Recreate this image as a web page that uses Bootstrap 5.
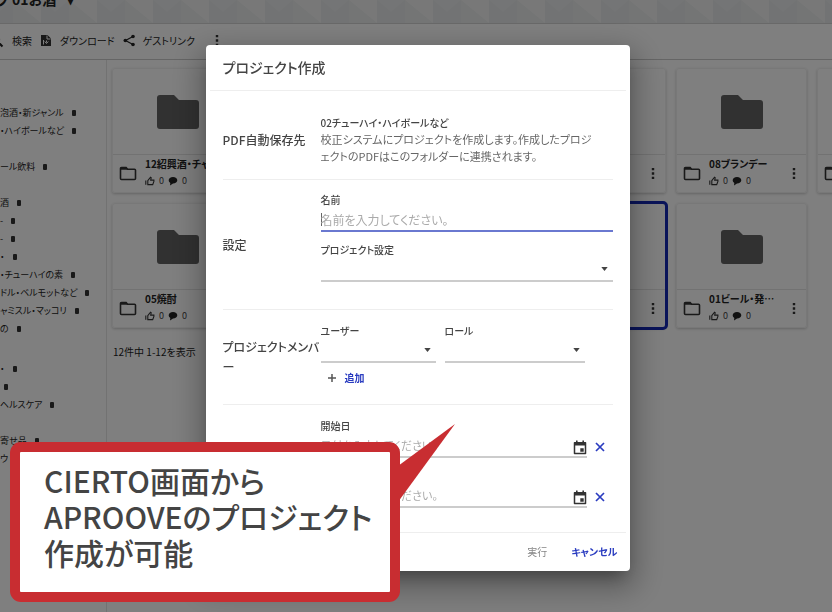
<!DOCTYPE html>
<html lang="ja">
<head>
<meta charset="utf-8">
<meta name="viewport" content="width=device-width, initial-scale=1">
<title>プロジェクト作成</title>
<link href="https://cdn.jsdelivr.net/npm/bootstrap@5.3.0/dist/css/bootstrap.min.css" rel="stylesheet">
<style>
body{font-family:"Noto Sans CJK JP",sans-serif;font-feature-settings:"palt";font-size:10px;line-height:18px;color:#222;background:#fff}
button,input,select{font-feature-settings:inherit}
.plain-btn{border:0;background:none;padding:0;color:inherit;font-size:inherit;line-height:inherit}
.page-shell{min-height:100vh}
.banner{height:24px;border-bottom:1px solid #d2d2d2;background:#f0f1f1 url("data:image/svg+xml,%3Csvg xmlns='http://www.w3.org/2000/svg' width='56' height='23'%3E%3Cpath d='M0 0h28v23H0z' fill='%23e4e7e8'/%3E%3Cpath d='M0 0h28L14 12z' fill='%23e9ebec'/%3E%3Cpath d='M28 0l28 23H28z' fill='%23e8eaea'/%3E%3C/svg%3E") -15px 0}
.banner-title{font-size:14px;line-height:18px;margin:-10px 0 0 -4px;font-weight:700}
.toolbar{height:36px;border-bottom:1px solid #cacaca;font-weight:700;padding-bottom:2px}
.toolbar-search{margin-left:-10px}
.side{width:107px;border-right:1px solid #e4e4e4;padding-top:44px;font-size:9px}
.side a{color:#222;text-decoration:none;display:flex;align-items:center;gap:8px;height:18px;white-space:nowrap}
.side .chip{width:4px;height:6px;background:#333;border-radius:1px}
.tiles{display:grid;grid-template-columns:repeat(6,131px);gap:10px;padding:8px 0 0 5px}
.tile{height:125px;border:1px solid #f1f1f1;border-radius:3px;box-shadow:0 1px 3px rgba(0,0,0,.22)}
.tile.picked{outline:3px solid #1428b4;outline-offset:-1px}
.tile-face{height:86px;border-bottom:1px solid #e4e4e4}
.tile-row{padding:1px 10px 0 6px}
.tile-name{font-size:10px;line-height:16px;width:70px;font-weight:700}
.tile-meta{font-size:9px;line-height:18px;color:#444}
.tile-count{margin:16px 0 0 6px;line-height:16px}
.create-wrap{padding:2px 0 0 3px;overflow:hidden}
.create-dialog{max-width:424px}
.create-box{border:0;border-radius:4px;color:#444;box-shadow:0 11px 15px -7px rgba(0,0,0,.3),0 12px 30px 6px rgba(0,0,0,.3)}
.create-head{font-size:14px;line-height:20px;height:46px;border-bottom:1px solid #eee;font-weight:500;margin:0 4px;padding:0 13px 2px}
.part{margin:0 17px;border-bottom:1px solid #eee;display:grid;grid-template-columns:98px 1fr;align-items:center}
.part:last-of-type{border:0}
.part-name{font-size:12px;font-weight:500;line-height:20px;margin:0;word-break:break-all}
.part-save{padding:24px 0 14px}
.part-set>div{padding:12px 0 27px}
.part-member>div{padding:13px 0 17px}
.part-dates>div{padding:13px 0 24px}
.note{font-size:11px;line-height:17px;color:#666;line-break:anywhere}
.fld-name{display:block;font-size:10px;line-height:16px;font-weight:500}
.fld-next{margin-top:10px}
.fld{display:block;width:100%;border:0;border-bottom:2px solid #ccc;background:transparent;border-radius:0;padding:0;height:24px;font-size:12px;color:#444;outline:0}
.fld::placeholder{color:#aaa;opacity:1}
.fld-main{border-color:#6a78d0;background:linear-gradient(#666,#666) left center/1px 13px no-repeat}
.fld-date{font-size:11px}
select.fld{appearance:none;background:url("data:image/svg+xml,%3Csvg xmlns='http://www.w3.org/2000/svg' viewBox='0 0 8 5'%3E%3Cpath d='M0 0h8L4 5z' fill='%23444'/%3E%3C/svg%3E") right 5px center/7px 4px no-repeat}
.member-row{display:grid;grid-template-columns:115px 140px;gap:9px}
.add-btn{margin:6px 0 0 6px}
.date-row{display:grid;grid-template-columns:1fr 10px;column-gap:8px;align-items:center;width:284px}
.date-row .fld{grid-area:1/1}
.date-row .cal-btn{grid-area:1/1;justify-self:end}
.link-blue{color:#2a3cc0;font-weight:700}
.create-foot{height:39px;margin:0 4px;border-top:1px solid #eee;padding-right:8px;gap:24px}
.callout-note{position:fixed;left:10px;top:442px;z-index:1060;width:390px;border:10px solid #c82d31;border-radius:11px;background:#fff;color:#444;font-size:30px;line-height:36px;font-weight:500;padding:10px 0 22px 24px;white-space:nowrap;margin:0}
.callout-tail{position:fixed;left:398px;top:424px;z-index:1060}
</style>
<script src="https://cdn.jsdelivr.net/npm/bootstrap@5.3.0/dist/js/bootstrap.bundle.min.js"></script>
</head>
<body class="overflow-hidden">
<svg width="0" height="0" class="position-absolute" aria-hidden="true">
  <symbol id="i-folder" viewBox="0 0 44 36"><path d="M4 1h14l5 5h17a3 3 0 0 1 3 3v23a3 3 0 0 1-3 3H4a3 3 0 0 1-3-3V4a3 3 0 0 1 3-3z" fill="#626262"/></symbol>
  <symbol id="i-folder-o" viewBox="0 0 18 15"><path d="M2.5 1.500h4.600l1.500 1.800h6.900a1 1 0 0 1 1 1v8.200a1 1 0 0 1-1 1h-13a1 1 0 0 1-1-1v-10a1 1 0 0 1 1-1z" fill="none" stroke="#333" stroke-width="1.600"/><path d="M1.500 1.200h5.800l1.800 2.600H1.500z" fill="#333"/></symbol>
  <symbol id="i-thumb" viewBox="0 0 10 10"><path d="M.8 4.500v4.300M2.800 4.600 5.500 1.200l.7.600-.5 2.300h3.200v1.300L7.700 8.600H2.800z" fill="none" stroke="#333" stroke-width="1.100"/></symbol>
  <symbol id="i-talk" viewBox="0 0 10 10"><path d="M5 1c2.500 0 4.300 1.400 4.300 3.300S7.500 7.600 5 7.600L2 9.500l.3-2.600C1.200 6.300.7 5.400.7 4.300.7 2.400 2.500 1 5 1z" fill="#222"/></symbol>
  <symbol id="i-dots" viewBox="0 0 4 14"><path d="M.7 1h2.600v2.600H.7zM.7 5.700h2.600v2.600H.7zM.7 10.400h2.600V13H.7z" fill="#333"/></symbol>
  <symbol id="i-cal" viewBox="0 0 14 15"><path d="M1.500 2.800h11v10.700h-11z" fill="none" stroke="#333" stroke-width="1.500" stroke-linejoin="round"/><path d="M1 2.500h12v3H1zM3 .5h1.600v2.500H3zM9.400.5H11v2.500H9.400zM7.300 8.300h3.400v3.400H7.300z" fill="#333"/></symbol>
  <symbol id="i-x" viewBox="0 0 10 10"><path d="M1 1l8 8M9 1 1 9" stroke="#2a3cc0" stroke-width="1.700"/></symbol>
</svg>

<div class="page-shell d-flex flex-column">
  <header class="banner overflow-hidden"><div class="banner-title">ブ 01お酒 <span class="ms-2">▾</span></div></header>
  <nav class="toolbar d-flex align-items-center" aria-label="操作">
    <button class="plain-btn toolbar-search d-flex align-items-center"><svg width="14" height="14" class="me-2" viewBox="0 0 14 14"><circle cx="5.500" cy="5.500" r="3.800" fill="none" stroke="#222" stroke-width="1.600"/><path d="M8.500 8.500 12.500 12.500" stroke="#222" stroke-width="2"/></svg>検索</button>
    <button class="plain-btn d-flex align-items-center ms-2"><svg width="12" height="13" class="me-2" viewBox="0 0 12 13"><path d="M1 1h6.500L11 4.500V12H1z" fill="#333"/><path d="M7 1.500V5h3.500M3.500 6v4.500M6.500 6.500v2M4.700 7.500 6.500 9.500 8.300 7.500" fill="none" stroke="#fff"/></svg>ダウンロード</button>
    <button class="plain-btn d-flex align-items-center ms-2"><svg width="12" height="13" class="me-2" viewBox="0 0 12 13"><path d="M10 2.500 2.500 6.500 10 10.500" fill="none" stroke="#222" stroke-width="1.200"/><g fill="#222"><circle cx="10" cy="2.500" r="1.800"/><circle cx="2.300" cy="6.500" r="1.800"/><circle cx="10" cy="10.500" r="1.800"/></g></svg>ゲストリンク</button>
    <button class="plain-btn ms-3 ps-1 d-flex" aria-label="その他"><svg width="4" height="13"><use href="#i-dots"/></svg></button>
  </nav>
  <div class="d-flex flex-grow-1">
    <nav class="side flex-shrink-0 overflow-hidden" aria-label="フォルダー">
      <a href="#">泡酒・新ジャンル<span class="chip"></span></a>
      <a href="#">・ハイボールなど<span class="chip"></span></a>
      <a href="#"></a>
      <a href="#">ール飲料<span class="chip"></span></a>
      <a href="#"></a>
      <a href="#">酒<span class="chip"></span></a>
      <a href="#">-<span class="chip"></span></a>
      <a href="#">-<span class="chip"></span></a>
      <a href="#">・<span class="chip"></span></a>
      <a href="#">・チューハイの素<span class="chip"></span></a>
      <a href="#">ドル・ベルモットなど<span class="chip"></span></a>
      <a href="#">ャミスル・マッコリ<span class="chip"></span></a>
      <a href="#">の<span class="chip"></span></a>
      <a href="#"></a>
      <a href="#" class="mt-1">・<span class="chip"></span></a>
      <a href="#"><span class="chip ms-1"></span></a>
      <a href="#">ヘルスケア<span class="chip"></span></a>
      <a href="#"></a>
      <a href="#">寄せ品<span class="chip"></span></a>
      <a href="#">ウ</a>
    </nav>
    <main class="flex-grow-1 overflow-hidden">
      <div class="tiles" id="tiles"></div>
      <p class="tile-count">12件中 1-12を表示</p>
    </main>
  </div>
</div>

<div class="modal-backdrop show"></div>
<div class="modal d-block create-wrap" role="dialog" aria-labelledby="dlg-title">
  <div class="modal-dialog modal-dialog-centered create-dialog my-0 min-vh-100">
    <form class="modal-content create-box">
      <h1 class="create-head d-flex align-items-center mb-0" id="dlg-title">プロジェクト作成</h1>
      <section class="part part-save">
        <h2 class="part-name">PDF自動保存先</h2>
        <div><div class="fld-name">02チューハイ・ハイボールなど</div><div class="note">校正システムにプロジェクトを作成します。作成したプロジ<br>ェクトのPDFはこのフォルダーに連携されます。</div></div>
      </section>
      <section class="part part-set">
        <h2 class="part-name">設定</h2>
        <div>
          <label class="fld-name" for="f-name">名前</label>
          <input class="fld fld-main" id="f-name" placeholder="名前を入力してください。">
          <label class="fld-name fld-next" for="f-set">プロジェクト設定</label>
          <select class="fld" id="f-set"><option></option></select>
        </div>
      </section>
      <section class="part part-member">
        <h2 class="part-name">プロジェクトメンバー</h2>
        <div>
          <div class="member-row">
            <div><label class="fld-name" for="f-user">ユーザー</label><select class="fld" id="f-user"><option></option></select></div>
            <div><label class="fld-name" for="f-role">ロール</label><select class="fld" id="f-role"><option></option></select></div>
          </div>
          <button type="button" class="plain-btn add-btn d-flex align-items-center gap-2"><svg width="10" height="10" viewBox="0 0 10 10"><path d="M5 1v8M1 5h8" stroke="#555" stroke-width="1.500"/></svg><span class="link-blue">追加</span></button>
        </div>
      </section>
      <section class="part part-dates">
        <h2 class="part-name">期間</h2>
        <div>
          <label class="fld-name" for="f-start">開始日</label>
          <div class="date-row"><input class="fld fld-date" id="f-start" placeholder="日付を入力してください。"><button type="button" class="plain-btn cal-btn" aria-label="開始日を選択"><svg width="14" height="15"><use href="#i-cal"/></svg></button><button type="button" class="plain-btn" aria-label="開始日を消去"><svg width="10" height="10"><use href="#i-x"/></svg></button></div>
          <label class="fld-name fld-next" for="f-end">終了日</label>
          <div class="date-row"><input class="fld fld-date" id="f-end" placeholder="日付を入力してください。"><button type="button" class="plain-btn cal-btn" aria-label="終了日を選択"><svg width="14" height="15"><use href="#i-cal"/></svg></button><button type="button" class="plain-btn" aria-label="終了日を消去"><svg width="10" height="10"><use href="#i-x"/></svg></button></div>
        </div>
      </section>
      <footer class="create-foot d-flex justify-content-end align-items-center">
        <button type="button" class="plain-btn text-black-50" disabled>実行</button>
        <button type="button" class="plain-btn link-blue">キャンセル</button>
      </footer>
    </form>
  </div>
</div>
<svg class="callout-tail" width="58" height="78" viewBox="0 0 58 78" aria-hidden="true"><path d="M57 0 0 42V78z" fill="#c82d31"/></svg>
<p class="callout-note">CIERTO画面から<br>APROOVEのプロジェクト<br>作成が可能</p>

<script>
const names = ["12紹興酒・チャ", "11ワイン", "10焼酎", "09ジン", "08ブランデー", "07リキュール",
  "05焼酎", "04カクテル", "03梅酒", "02酎ハイ", "01ビール・発…"];
document.getElementById("tiles").innerHTML = names.map((n, i) => `
<article class="tile${i === 9 ? " picked" : ""}">
  <div class="tile-face d-flex align-items-center justify-content-center"><svg width="44" height="36"><use href="#i-folder"/></svg></div>
  <div class="tile-row d-flex align-items-center gap-2">
    <svg width="18" height="15" class="flex-shrink-0"><use href="#i-folder-o"/></svg>
    <div class="flex-grow-1 text-nowrap"><div class="tile-name">${n}</div>
      <div class="tile-meta d-flex align-items-center gap-1"><svg width="10" height="10"><use href="#i-thumb"/></svg>0<svg width="10" height="10"><use href="#i-talk"/></svg>0</div></div>
    <button class="plain-btn d-flex" aria-label="メニュー"><svg width="4" height="13"><use href="#i-dots"/></svg></button>
  </div>
</article>`).join("");
</script>
</body>
</html>
